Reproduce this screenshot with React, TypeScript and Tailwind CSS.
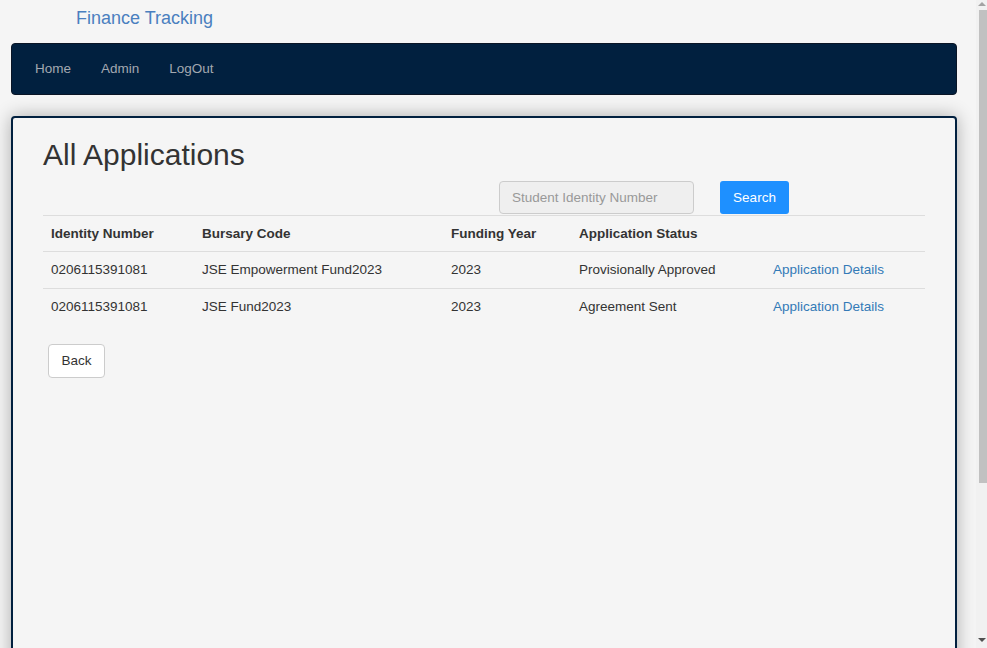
const rows = [
  {
    id: "0206115391081",
    code: "JSE Empowerment Fund2023",
    year: "2023",
    status: "Provisionally Approved",
  },
  {
    id: "0206115391081",
    code: "JSE Fund2023",
    year: "2023",
    status: "Agreement Sent",
  },
];

function App() {
  return (
    <div className="flex items-start bg-[#f5f5f5] font-['Liberation_Sans',Arial,sans-serif] text-[13.5px] leading-[20px] text-[#333]">
      <div className="min-h-[760px] w-[976px]">
        <div className="h-[43px] pl-[76px] pt-[6px]">
          <a href="#" className="text-[18px] leading-[24px] text-[#4a7fbf]">
            Finance Tracking
          </a>
        </div>

        <nav className="mx-[11px] flex h-[52px] w-[946px] items-center rounded-[4px] border border-[#0a1526] bg-[#01203f] px-[23px] pb-[1px]">
          <a href="#" className="text-[#a3a8b0]">Home</a>
          <a href="#" className="ml-[30px] text-[#a3a8b0]">Admin</a>
          <a href="#" className="ml-[30px] text-[#a3a8b0]">LogOut</a>
        </nav>

        <div className="mx-[11px] mt-[21px] min-h-[640px] w-[946px] rounded-[4px] border-2 border-[#01203f] bg-[#f5f5f5] px-[30px] pt-[20px] shadow-[0_0_18px_rgba(0,0,0,0.3)]">
          <h2 className="text-[30px] leading-[33px] font-normal text-[#333]">
            All Applications
          </h2>

          <div className="mt-[10px] flex h-[34px] items-start pl-[456px]">
            <input
              type="text"
              placeholder="Student Identity Number"
              className="h-[33px] w-[195px] rounded-[4px] border border-[#ccc] bg-[#efefef] px-[12px] text-[13.5px] text-[#555] outline-none placeholder:text-[#999]"
            />
            <button
              type="button"
              className="ml-[26px] h-[33px] w-[69px] rounded-[3px] bg-[#1e90ff] text-[13.5px] text-white"
            >
              Search
            </button>
          </div>

          <table className="w-[882px] border-collapse text-left">
            <thead>
              <tr className="border-t border-[#ddd]">
                <th className="w-[151px] px-[8px] py-[8px] leading-[19px] font-bold">Identity Number</th>
                <th className="w-[249px] px-[8px] py-[8px] leading-[19px] font-bold">Bursary Code</th>
                <th className="w-[128px] px-[8px] py-[8px] leading-[19px] font-bold">Funding Year</th>
                <th className="w-[194px] px-[8px] py-[8px] leading-[19px] font-bold">Application Status</th>
                <th className="px-[8px] py-[8px] leading-[19px]"></th>
              </tr>
            </thead>
            <tbody>
              {rows.map((row, i) => (
                <tr key={i} className="border-t border-[#ddd]">
                  <td className="px-[8px] py-[8px]">{row.id}</td>
                  <td className="px-[8px] py-[8px]">{row.code}</td>
                  <td className="px-[8px] py-[8px]">{row.year}</td>
                  <td className="px-[8px] py-[8px]">{row.status}</td>
                  <td className="px-[8px] py-[8px]">
                    <a href="#" className="text-[#337ab7]">Application Details</a>
                  </td>
                </tr>
              ))}
            </tbody>
          </table>

          <button
            type="button"
            className="mt-[19px] ml-[5px] h-[34px] w-[57px] rounded-[4px] border border-[#ccc] bg-white text-[13.5px] text-[#333]"
          >
            Back
          </button>
        </div>
      </div>

      {/* scrollbar strip as it shows in the screenshot */}
      <div className="flex h-[648px] w-[11px] flex-col items-end bg-[#f1f1f1]">
        <div className="mt-[2px] mr-[1px] h-0 w-0 border-x-[4px] border-b-[4px] border-x-transparent border-b-[#a3a3a3]" />
        <div className="mt-[4px] h-[473px] w-[8px] bg-[#c1c1c1]" />
        <div className="flex-1" />
        <div className="mb-[6px] mr-[1px] h-0 w-0 border-x-[4px] border-t-[4px] border-x-transparent border-t-[#505050]" />
      </div>
    </div>
  );
}

export default App;
